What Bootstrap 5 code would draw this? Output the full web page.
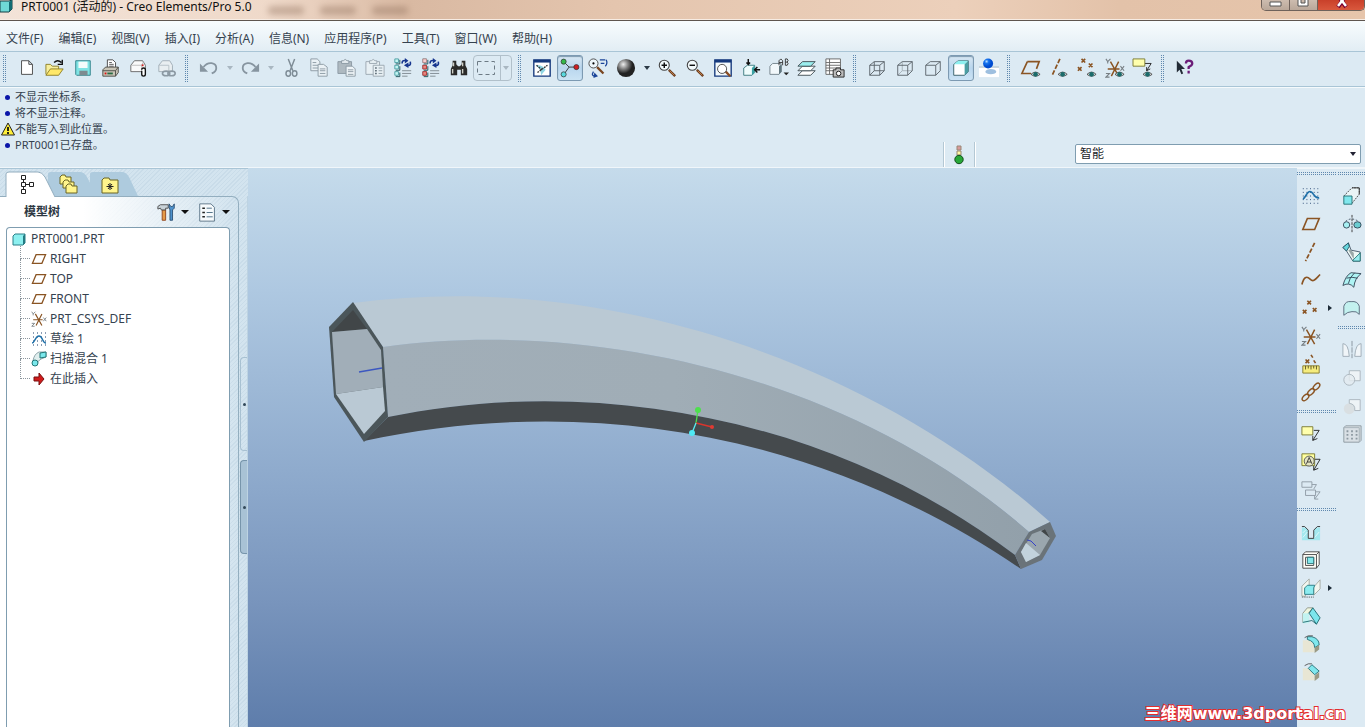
<!DOCTYPE html>
<html lang="zh-CN">
<head>
<meta charset="utf-8">
<meta name="viewport" content="width=device-width, initial-scale=1">
<title>PRT0001 (活动的) - Creo Elements/Pro 5.0</title>
<link href="https://cdn.jsdelivr.net/npm/bootstrap@5.3.0/dist/css/bootstrap.min.css" rel="stylesheet">
<style>
:root{--pane:#dceaf3;--line:#a9c5d6;--dot:#5f88ae}
body{font-family:"Noto Sans","Noto Sans CJK SC",sans-serif;font-size:12px;line-height:16px;color:#35424f;background:var(--pane)}
button{border:0;background:none;padding:0;color:inherit}
svg{display:block;overflow:visible}
.titlebar{height:21px;background:linear-gradient(90deg,#f3e3d8 0,#efd9c9 20%,#d9b9a2 30%,#e4c5ae 45%,#ecd0bb 70%,#e3c2a9 82%,#e6c5ab);border-bottom:1px solid #5f564f;box-shadow:inset 0 -1px #f7ece3;color:#111}
.titlebar h1{font-size:12px;line-height:14px;font-weight:400}
.ghost i{width:36px;height:9px;border-radius:4px;background:#8c6c58;opacity:.4;filter:blur(3px)}
.winbtns{height:11px;border:1px solid #6f625b;border-top:0;border-radius:0 0 5px 5px;overflow:hidden}
.winbtns button{height:10px;width:28px;background:linear-gradient(#cdbcaf,#b9a799);border-right:1px solid #6f625b}
.winbtns .x{width:46px;border:0;background:linear-gradient(#c9402a,#d9583d)}
.menubar{height:31px;padding:5px 6px 0;gap:15px;background:linear-gradient(#f8fcfe,#e2edf4);border-bottom:1px solid var(--line)}
.menubar a{color:#35424f;text-decoration:none}
.tools{height:35px;padding:0 0 2px 3px;border-bottom:1px solid var(--line);box-shadow:0 1px #f5fafc}
.tb{width:28px;height:26px;display:flex;align-items:center;justify-content:center;flex:none}
.tb svg{width:22px;height:22px}
.tools .tb svg{width:20px;height:20px}
.tools .tb.on{width:26px;margin:0 1px;border:1px solid #7d9ab2;border-radius:3px;background:linear-gradient(#d8e7f2,#b9d6ee 50%,#cbe3f4);box-shadow:inset 0 1px 1px #7e9ab0}
.dd{width:13px;height:26px;display:flex;align-items:center;justify-content:center}
.dd::after{content:"";border:3px solid transparent;border-top:4px solid #2c3a46;border-bottom:0}
.phead .dd::after{border-width:4px 4px 0;border-top-color:#111}
.dd.off::after{border-top-color:#a9b7c1}
.grip{width:3px;height:27px;margin:0 7px 0 4px;flex:none;background:repeating-linear-gradient(transparent 0 1px,var(--pane) 1px 2px),repeating-linear-gradient(90deg,var(--dot) 0 1px,var(--pane) 1px 2px)}
.grip:first-child{margin-left:0}
.griph{height:3px;margin:4px 0 7px;background:repeating-linear-gradient(transparent 0 1px,var(--pane) 1px 2px),repeating-linear-gradient(90deg,var(--dot) 0 1px,var(--pane) 1px 2px)}
.griph:first-child{margin-top:3px}
.selbox{width:39px;height:26px;margin:0 2px 0 0;border:1px solid #b1c0ca;border-radius:4px}
.selbox button+button{border-left:1px solid #b1c0ca;height:24px;width:12px}
.msgs{height:81px;border-bottom:1px solid #f0f6fa;padding:2px 4px 0 0}
.msgs ul{font-size:11px;line-height:16px}
.msgs li{padding-left:15px;position:relative}
.msgs li::before{content:"";position:absolute;left:5px;top:6px;width:5px;height:5px;border-radius:50%;background:#0a16a8}
.msgs li.warn::before{display:none}
.msgs li svg{position:absolute;left:1px;top:1px}
.status{width:32px;height:25px;border:solid #b4c8d4;border-width:0 1px;box-shadow:1px 0 #fff,inset 1px 0 #fff}
.pickwrap{padding-bottom:3px}
.msgs .pick{width:286px;height:20px;padding:0 4px;font-size:12px;line-height:16px;border:1px solid #7f9db0;border-radius:2px;background:#fff url("data:image/svg+xml,%3Csvg xmlns='http://www.w3.org/2000/svg' viewBox='0 0 6 4'%3E%3Cpath d='M0 0h6L3 4z' fill='%23223'/%3E%3C/svg%3E") no-repeat right 4px center/6px 4px}
.work{min-height:0}
.side{width:248px;padding-top:2px;background:repeating-linear-gradient(135deg,#d3e4ef 0 2px,#c9dce9 2px 3px);border-top:1px solid var(--line)}
.tabs{height:25px;padding-left:6px}
.tabs button{width:42px;height:25px;position:relative;flex:none}
.tabs button:first-child{z-index:2}
.pane{width:239px;border:1px solid #93aebf;border-width:1px 1px 0 0;border-radius:0 7px 0 0;background:linear-gradient(90deg,#fff 35%,transparent)}
.phead{height:30px;padding:0 6px 0 24px}
.phead h2{font-size:12px;font-weight:700;line-height:16px;color:#2d3843}
.phead .tb{width:24px}
.phead .tb svg{width:19px;height:19px}
.tree{margin:0 8px 0 6px;background:#fff;border:1px solid #7f9db0;border-bottom:0;border-radius:4px 4px 0 0;padding:1px 5px}
.tree li{height:20px;gap:3px;display:flex;align-items:center;white-space:nowrap}
.tree svg{width:16px;height:16px}
.tree ul li{padding-left:19px;position:relative}
.tree ul li::before{content:"";position:absolute;left:8px;top:-10px;width:10px;height:20px;border:dotted #8b959c;border-width:0 0 1px 1px}
.tree ul li:first-child::before{top:-3px;height:13px}
.split{width:9px;border-right:1px solid #bdd3e2;padding-top:161px;gap:9px}
.split button{width:7px;height:94px;margin-left:1px;border:1px solid #a8c1d2;border-right:0;border-radius:4px 0 0 4px;position:relative}
.split button::after{content:"";position:absolute;left:2px;top:45px;width:3px;height:3px;border-radius:50%;background:#33495a}
.split button+button{background:#a8c2d5;border-color:#7795ab}
.view{min-width:0;background:linear-gradient(#c5dbeb 0,#aec8e1 22%,#8fabcd 54%,#7894bc 78%,#5e7dab 100%)}
.right{width:68px;gap:2px;border-top:1px solid #f0f6fa}
.right .tb{height:28px;width:27px}
.right .tb svg{width:20px;height:20px}
.c1{width:39px}.c2{width:27px}
.fly{display:flex;align-items:center}
.fly::after{content:"";border:3px solid transparent;border-left:4px solid #1d2b37;border-right:0;margin-left:4px}
.sitemark{position:absolute;right:19px;bottom:3px;font:bold 16px/20px "DejaVu Sans","Noto Sans CJK SC",sans-serif;color:#fff;-webkit-text-stroke:2px #e32d2d;paint-order:stroke fill;white-space:nowrap}
</style>
</head>
<body>
<svg width="0" height="0" class="position-absolute" aria-hidden="true"><defs>
<g id="eye"><path d="M0 4Q5-1 10 4Q5 8 0 4" fill="#e8f0f0" stroke="#444"/><circle cx="5" cy="4" r="2.6" fill="#1b6b6b"/></g>
<symbol id="plane" viewBox="0 0 22 22"><path d="M7 5H20L15 17H2Z" fill="none" stroke="#8a5423" stroke-width="1.8"/></symbol>
<symbol id="axis" viewBox="0 0 22 22"><path d="M15 1L5 21" stroke="#8a5423" stroke-width="1.9" stroke-dasharray="5 2"/></symbol>
<symbol id="csys" viewBox="0 0 22 22"><path d="M3 12H16M6 4L15 20M15 4L7 20" stroke="#8a5423" stroke-width="1.6"/><path d="M1 1L3 4L6 1M3 4V6M17 9L21 14M21 9L17 14M1 17H5L1 21H5" fill="none" stroke="#777f84" stroke-width="1.200"/></symbol>
<symbol id="sketch" viewBox="0 0 22 22"><path d="M2 3H21M2 7H21M2 11H21M2 15H21M2 19H21" stroke="#1b3c6a" stroke-dasharray="1 3"/><path d="M2 14C5 14 6 6 10 6S14 14 20 13" fill="none" stroke="#1d6fa8" stroke-width="1.8"/></symbol>
<symbol id="arc" viewBox="0 0 16 16"><path d="M2 2H15M2 6H15M2 10H15M2 14H15" stroke="#1b3c6a" stroke-dasharray="1 3"/><path d="M1 12C4 12 4 5 8 5S11 12 15 12" fill="none" stroke="#1d6fa8" stroke-width="1.400"/></symbol>
<symbol id="cube" viewBox="0 0 22 22"><path d="M3 7L8 3H19V15L15 19H3Z" fill="#fff" stroke="#335d66"/><path d="M3 7L8 3H19L15 7Z" fill="#8df0f0"/><path d="M15 7L19 3V15L15 19Z" fill="#4a9ea3"/></symbol>
<symbol id="list3" viewBox="0 0 22 22"><g fill="#c5f6f4" stroke="#4a9ea3"><path d="M2 1H6V5H2ZM2 8H6V12H2ZM2 15H6V19H2Z"/></g><path d="M3 6.500H7.500V2M3 13.500H7.500V9M3 20.500H7.500V16" fill="none" stroke="#174e55"/></symbol>
<symbol id="swap" viewBox="0 0 22 22"><path d="M10 6Q10 2 14 3M19 4Q20 9 16 8" fill="none" stroke="#16358e" stroke-width="1.800"/><path d="M13 0L17 3L13 6ZM17 5L12 8L17 11Z" fill="#16358e"/><path d="M10 14H20M10 17H20M10 20H16" stroke="#7d8990"/></symbol>
<symbol id="note" viewBox="0 0 22 22"><path d="M14 7H20L13 18M13 13V18L18 16" fill="none" stroke="#222"/><path d="M1 3H13V12H1Z" fill="#ffffad" stroke="#77772f"/></symbol>
<symbol id="chain" viewBox="0 0 22 22"><g fill="none" stroke="#8a5423" stroke-width="1.6"><ellipse cx="5" cy="17" rx="4.500" ry="2.500" transform="rotate(-45 5 17)"/><ellipse cx="11" cy="11" rx="4.500" ry="2.500" transform="rotate(-45 11 11)"/><ellipse cx="17" cy="5" rx="4.500" ry="2.500" transform="rotate(-45 17 5)"/></g></symbol>
<symbol id="lens" viewBox="0 0 22 22"><path d="M13 13L20 20" stroke="#6b3c1c" stroke-width="2.600"/><path d="M14 14L19 19" stroke="#c78350"/><circle cx="8" cy="8" r="5.500" fill="#f3fafc" stroke="#444" stroke-width="1.200"/></symbol>
<radialGradient id="ball" cx=".35" cy=".3"><stop stop-color="#eee"/><stop offset=".5" stop-color="#858585"/><stop offset="1" stop-color="#222"/></radialGradient>
<radialGradient id="blue" cx=".35" cy=".3"><stop stop-color="#b9dcff"/><stop offset=".4" stop-color="#1674ee"/><stop offset="1" stop-color="#004cd0"/></radialGradient>
</defs></svg>

<div class="d-flex flex-column vh-100 overflow-hidden">
<header class="titlebar d-flex">
  <svg width="13" height="13" viewBox="0 0 13 13"><path d="M0 1H9L12 0V9L9 12H0Z" fill="#6fd9d6" stroke="#173f45"/><path d="M9 2V12L12 9V0Z" fill="#136b72"/></svg>
  <h1 class="mb-0 ms-2">PRT0001 (活动的) - Creo Elements/Pro 5.0</h1>
  <div class="ghost d-flex gap-3 ms-3 align-items-center flex-grow-1"><i></i><i></i><i></i></div>
  <div class="winbtns d-flex">
    <button aria-label="最小化"><svg width="27" height="10"><path d="M8 2H19V6H8Z" fill="#fff" stroke="#555"/></svg></button>
    <button aria-label="最大化"><svg width="27" height="10"><path d="M8 -2H18V6H8ZM11 -1V3H15V-1" fill="#fff" stroke="#555"/></svg></button>
    <button class="x" aria-label="关闭"><svg width="46" height="10"><path d="M20 7L27 -3M28 7L21 -3" stroke="#703" stroke-width="4"/><path d="M20 6L27 -3M28 6L21 -3" stroke="#fff" stroke-width="2.500"/></svg></button>
  </div>
</header>
<nav class="menubar d-flex align-items-center"><a href="#">文件(F)</a><a href="#">编辑(E)</a><a href="#">视图(V)</a><a href="#">插入(I)</a><a href="#">分析(A)</a><a href="#">信息(N)</a><a href="#">应用程序(P)</a><a href="#">工具(T)</a><a href="#">窗口(W)</a><a href="#">帮助(H)</a></nav>

<div class="tools d-flex align-items-center" role="toolbar" aria-label="工具栏">
  <span class="grip"></span>
  <button class="tb" aria-label="新建"><svg viewBox="0 0 22 22"><path d="M5 3H13L17 7V18H5ZM13 3V7H17" fill="#fff" stroke="#444"/></svg></button>
  <button class="tb" aria-label="打开"><svg viewBox="0 0 22 22"><path d="M1 18V7H6L8 9H15V12" fill="#f7ee9c" stroke="#8a7d24"/><path d="M1 19L6 12H20L15 19Z" fill="#ffe86a" stroke="#8a7d24"/><path d="M10 5Q14 1 18 5M19 2V7H14" fill="none" stroke="#111" stroke-width="1.500"/></svg></button>
  <button class="tb" aria-label="保存"><svg viewBox="0 0 22 22"><path d="M3 3H19V19H4L3 18Z" fill="#7fe3e4" stroke="#2b7f88"/><path d="M6 4H16V11H6Z" fill="#f4fcfc"/><path d="M7 14H16V19H7Z" fill="#7d8b90"/></svg></button>
  <button class="tb" aria-label="打印"><svg viewBox="0 0 22 22"><path d="M7 11V2H13L16 5V11" fill="#fff" stroke="#444"/><path d="M9 5H12M9 7H14M9 9H14" stroke="#555"/><path d="M2 13L5 10H19V16L16 20H2Z" fill="#c8c4b6" stroke="#4b4b45"/><path d="M2 14H16V20M16 14L19 10" fill="none" stroke="#4b4b45"/><path d="M4 16H6V18H4Z" fill="#d11"/><path d="M7 16H13V18H7Z" fill="#286a42"/></svg></button>
  <button class="tb" aria-label="发送"><svg viewBox="0 0 22 22"><path d="M2 8L6 3H15L18 8V15H2Z" fill="#fafafa" stroke="#666"/><path d="M2 8H14V15M14 8L16 4" fill="none" stroke="#bbb"/><path d="M14 7H16V9H14Z" fill="#c22"/><path d="M14 13Q14 11 16 11T18 13V18Q18 20 16 20T14 18V14" fill="#fff" stroke="#111" stroke-width="1.500"/></svg></button>
  <button class="tb" aria-label="发送链接"><svg viewBox="0 0 22 22"><path d="M2 8L6 3H14L17 8V15H2Z" fill="#e9eef1" stroke="#a0acb5"/><path d="M2 8H13V15" fill="none" stroke="#b6c0c7"/><g fill="none" stroke="#8c99a3" stroke-width="1.800"><ellipse cx="10" cy="17" rx="4" ry="2.500"/><ellipse cx="16" cy="17" rx="4" ry="2.500"/></g></svg></button>
  <span class="grip"></span>
  <button class="tb" aria-label="撤消"><svg viewBox="0 0 22 22"><path d="M5 10C10 3 19 5 19 11Q19 15 14 17" fill="none" stroke="#8795a0" stroke-width="2"/><path d="M1 6V15H10Z" fill="#8795a0"/></svg></button><button class="dd off" aria-label="撤消列表"></button>
  <button class="tb" aria-label="重做"><svg viewBox="0 0 22 22"><path d="M17 10C12 3 3 5 3 11Q3 15 8 17" fill="none" stroke="#8795a0" stroke-width="2"/><path d="M21 6V15H12Z" fill="#8795a0"/></svg></button><button class="dd off" aria-label="重做列表"></button>
  <button class="tb" aria-label="剪切"><svg viewBox="0 0 22 22"><g fill="none" stroke="#7e8c96" stroke-width="1.600"><path d="M8 1L13 14M15 1L10 14"/><ellipse cx="8" cy="17" rx="2.500" ry="3"/><ellipse cx="15" cy="17" rx="2.500" ry="3"/></g></svg></button>
  <button class="tb" aria-label="复制"><svg viewBox="0 0 22 22"><g fill="#eaf1f5" stroke="#8a98a2"><path d="M2 1H9L12 4V14H2Z"/><path d="M4 5H8M4 8H10M4 11H10"/><path d="M10 7H16L20 10V20H10Z"/><path d="M12 12H18M12 14H18M12 17H18"/></g></svg></button>
  <button class="tb" aria-label="粘贴"><svg viewBox="0 0 22 22"><path d="M1 4H16V17H1Z" fill="#aeb9c0" stroke="#8a98a2"/><path d="M5 6V3H7Q9 0 11 3H13V6Z" fill="#e4ebef" stroke="#8a98a2"/><path d="M10 9H17L20 12V20H10Z" fill="#eef4f7" stroke="#8a98a2"/><path d="M12 13H18M12 15H18M12 18H18" stroke="#8a98a2"/></svg></button>
  <button class="tb" aria-label="选择性粘贴"><svg viewBox="0 0 22 22"><g fill="#e8f0f4" stroke="#9aa7b0"><path d="M1 4H16V18H1Z"/><path d="M5 6V3H7Q9 0 11 3H13V6Z"/><path d="M9 8H21V20H9Z"/></g><path d="M11 11H13M11 14H13M11 17H13" stroke="#66747e" stroke-width="1.600"/><path d="M15 11H19M15 14H19M15 17H19" stroke="#8a98a2"/></svg></button>
  <button class="tb" aria-label="再生"><svg viewBox="0 0 22 22"><use href="#list3"/><use href="#swap"/></svg></button>
  <button class="tb" aria-label="再生管理器"><svg viewBox="0 0 22 22"><use href="#list3"/><path d="M2 1H6V5H2Z" fill="#f7d1d1" stroke="#b88"/><path d="M2 8H6V12H2ZM2 15H6V19H2Z" fill="#e78a81" stroke="#b33"/><use href="#swap"/></svg></button>
  <button class="tb" aria-label="查找"><svg viewBox="0 0 22 22"><path d="M4 3H8V7L10 9H12L14 7V3H18V8L20 12V19H13V13H9V19H2V12L4 8Z" fill="#2b2b29"/><path d="M5 5V9M4 12V17M15 5V9M15 12V17" stroke="#cfcfc6" stroke-width="1.500"/></svg></button>
  <span class="selbox d-flex"><button class="flex-grow-1" aria-label="选取框"><svg width="26" height="24"><path d="M3.500 5.500H20.500V18.500H3.500Z" fill="none" stroke="#6c7a84" stroke-dasharray="4 3"/></svg></button><button class="dd off" aria-label="选取方式"></button></span>
  <span class="grip"></span>
  <button class="tb" aria-label="重画"><svg viewBox="0 0 22 22"><path d="M2 2H20V20H2Z" fill="#fff" stroke="#15397d" stroke-width="1.500"/><path d="M2 2H20V5H2Z" fill="#15397d"/><path d="M4 8Q12 7 15 13L10 19Q10 12 4 8Z" fill="#8ed6e4"/><path d="M5 8L11 13M6 16L10 13L17 8" fill="none" stroke="#333" stroke-width="1.500" stroke-dasharray="2 1"/></svg></button>
  <button class="tb on" aria-label="旋转中心"><svg viewBox="0 0 22 22"><path d="M5 5L10 10L5 17M10 10H18" fill="none" stroke="#333"/><g stroke="#333" stroke-width=".8"><circle cx="4" cy="4" r="2.800" fill="#35b94a"/><circle cx="4" cy="18" r="2.800" fill="#58d9df"/><circle cx="18" cy="10" r="2.800" fill="#d01e23"/></g></svg></button>
  <button class="tb" aria-label="定向模式"><svg viewBox="0 0 22 22"><path d="M10 10L17 17" stroke="#7a4520" stroke-width="2.500"/><circle cx="6" cy="6" r="5" fill="#eef6fa" stroke="#444"/><circle cx="6" cy="6" r="1.200"/><path d="M13 2H19M14 6H18M20 2Q22 6 19 9M6 15Q3 20 8 20" fill="none" stroke="#1a4499" stroke-width="1.400"/><path d="M7 16L11 20L6 22Z" fill="#1a4499"/></svg></button>
  <button class="tb" aria-label="外观库"><svg viewBox="0 0 22 22"><circle cx="11" cy="11" r="10" fill="url(#ball)"/></svg></button><button class="dd" aria-label="外观列表"></button>
  <button class="tb" aria-label="放大"><svg viewBox="0 0 22 22"><use href="#lens"/><path d="M5 8H11M8 5V11" stroke="#111" stroke-width="1.600"/></svg></button>
  <button class="tb" aria-label="缩小"><svg viewBox="0 0 22 22"><use href="#lens"/><path d="M5 8H11" stroke="#111" stroke-width="1.600"/></svg></button>
  <button class="tb" aria-label="重新调整"><svg viewBox="0 0 22 22"><path d="M2 2H20V20H2Z" fill="#f4fafc" stroke="#15397d" stroke-width="1.500"/><path d="M2 2H20V5H2Z" fill="#15397d"/><path d="M14 15L19 20" stroke="#8a4c22" stroke-width="2.500"/><circle cx="10" cy="12" r="5" fill="#fff" stroke="#444"/></svg></button>
  <button class="tb" aria-label="重定向"><svg viewBox="0 0 22 22"><path d="M3 11L7 8H15V16L12 19H3Z" fill="#eefcfc" stroke="#38777d"/><path d="M12 11L15 8V16L12 19Z" fill="#3aa2a4"/><path d="M8 1V7M6 5L8 7L10 5M21 13H15M18 10L15 13L18 16" fill="none" stroke="#111" stroke-width="1.600"/></svg></button>
  <button class="tb" aria-label="已命名视图"><svg viewBox="0 0 22 22"><path d="M1 9L4 6H13V15L11 18H1Z" fill="#f2f8fb" stroke="#718089"/><path d="M11 9V18L14 15V7Z" fill="#62777f"/><path d="M11 8V3L13 1L15 3V8M11 5H15M18 1V8H20Q22 6 20 4.500Q22 3 20 1H18M18 4.500H20" fill="none" stroke="#333"/><path d="M16 16H22L19 19Z" fill="#222"/></svg></button>
  <button class="tb" aria-label="层"><svg viewBox="0 0 22 22"><g stroke="#3d4a50"><path d="M1 19L6 14H20L15 19Z" fill="#fff"/><path d="M1 14L6 9H20L15 14Z" fill="#fff"/><path d="M1 9L6 4H20L15 9Z" fill="#9beeee"/></g></svg></button>
  <button class="tb" aria-label="视图管理器"><svg viewBox="0 0 22 22"><path d="M1 1H17V18H1ZM1 5H17M1 8H17M1 11H17M1 14H17M5 1V18" fill="#fff" stroke="#666"/><path d="M9 13H12V11H17V13H21V21H9Z" fill="#bbb" stroke="#222"/><circle cx="15" cy="17" r="2.500" fill="#fff" stroke="#111"/></svg></button>
  <span class="grip"></span>
  <button class="tb" aria-label="线框"><svg viewBox="0 0 22 22"><path d="M3 8H14V19H3ZM8 4H19V14H8ZM3 8L8 4M14 8L19 4M14 19L19 14M3 19L8 14" fill="none" stroke="#596269"/></svg></button>
  <button class="tb" aria-label="隐藏线"><svg viewBox="0 0 22 22"><path d="M8 4V14H19M3 19L8 14" fill="none" stroke="#a5b0b7"/><path d="M3 8H14V19H3ZL8 4H19V14L14 19M14 8L19 4" fill="none" stroke="#596269"/></svg></button>
  <button class="tb" aria-label="消隐"><svg viewBox="0 0 22 22"><path d="M3 8H14V19H3ZL8 4H19V14L14 19M14 8L19 4" fill="none" stroke="#596269"/></svg></button>
  <button class="tb on" aria-label="着色"><svg viewBox="0 0 22 22"><use href="#cube"/></svg></button>
  <button class="tb" aria-label="增强的真实感"><svg viewBox="0 0 22 22"><path d="M0 10H22V21H0Z" fill="#fff"/><path d="M0 10H22" stroke="#9fb4c1"/><ellipse cx="13" cy="15" rx="6" ry="3" fill="#9ebfdf"/><circle cx="10" cy="6" r="5.500" fill="url(#blue)"/></svg></button>
  <span class="grip"></span>
  <button class="tb" aria-label="基准平面显示"><svg viewBox="0 0 22 22"><path d="M7 4H20L17 12M7 4L1 17H11" fill="none" stroke="#8a5423" stroke-width="1.800"/><use href="#eye" x="11" y="14"/></svg></button>
  <button class="tb" aria-label="基准轴显示"><svg viewBox="0 0 22 22"><path d="M12 1L3 20" stroke="#8a5423" stroke-width="1.900" stroke-dasharray="5 2"/><use href="#eye" x="10" y="14"/></svg></button>
  <button class="tb" aria-label="基准点显示"><svg viewBox="0 0 22 22"><path d="M5 1L9 5M9 1L5 5M13 6L17 10M17 6L13 10M1 10L5 14M5 10L1 14" stroke="#8a5423" stroke-width="1.800"/><use href="#eye" x="11" y="14"/></svg></button>
  <button class="tb" aria-label="坐标系显示"><svg viewBox="0 0 22 22"><use href="#csys" width="22" height="22"/><use href="#eye" x="11" y="14"/></svg></button>
  <button class="tb" aria-label="注释显示"><svg viewBox="0 0 22 22"><path d="M13 6H20L15 14M15 10V14L19 12" fill="none" stroke="#222"/><path d="M0 1H13V9H0Z" fill="#ffffad" stroke="#77772f"/><use href="#eye" x="11" y="14"/></svg></button>
  <span class="grip"></span>
  <button class="tb" aria-label="上下文相关帮助"><svg viewBox="0 0 22 22"><path d="M2 3V16L5 13L7 18L9 17L7 12H11Z" fill="#222b36"/><path d="M12 6Q12 3 15 3Q19 3 19 6Q19 8 15 10V12M15 14V17" fill="none" stroke="#6b1d78" stroke-width="2.500"/></svg></button>
</div>

<section class="msgs d-flex align-items-end">
  <ul class="list-unstyled mb-0 align-self-start flex-grow-1"><li>不显示坐标系。</li><li>将不显示注释。</li><li class="warn"><svg width="14" height="14" viewBox="0 0 14 14"><path d="M7 1L13.500 13H.5Z" fill="#ffef3a" stroke="#222"/><path d="M7 5V9M7 10V12" stroke="#111" stroke-width="1.800"/></svg>不能写入到此位置。</li><li>PRT0001已存盘。</li></ul>
  <div class="status d-flex align-items-center justify-content-center me-5"><svg width="10" height="20" viewBox="0 0 10 20"><path d="M3 1H7V5H3Z" fill="#d99a9a" stroke="#987"/><path d="M3 6H7V10H3Z" fill="#fff7a0" stroke="#987"/><circle cx="5" cy="14.500" r="4.200" fill="#27a838" stroke="#134d1b"/></svg></div>
  <div class="pickwrap ms-5"><select class="form-select pick ms-1" aria-label="选取过滤器"><option>智能</option></select></div>
</section>

<main class="work d-flex flex-grow-1">
  <aside class="side d-flex flex-column flex-shrink-0">
    <div class="tabs d-flex" role="tablist">
      <button role="tab" aria-selected="true" aria-label="模型树"><svg width="50" height="26" viewBox="0 0 50 26"><path d="M0 26V3Q0 1 3 1H32Q36 1 39 6L49 26Z" fill="#fff"/><path d="M0 26V3Q0 1 3 1H32Q36 1 39 6L49 26" fill="none" stroke="#93aebf"/><path d="M15.500 4.500H19.500V8.500H15.500ZM15.500 11.500H19.500V15.500H15.500ZM15.500 18.500H19.500V22.500H15.500ZM23.500 11.500H27.500V15.500H23.500ZM17.500 8V11M17.500 15V18M19.500 13.500H23" fill="#fff" stroke="#222"/></svg></button>
      <button role="tab" aria-selected="false" aria-label="文件夹浏览器"><svg width="50" height="26" viewBox="0 0 50 26"><path d="M0 25V3Q0 1 3 1H32Q36 1 39 6L49 25H7Z" fill="#aecbde"/><g fill="#fff58c" stroke="#6b6524"><path d="M12 6L14 4H17L18 6H23V13H12Z"/><path d="M15 11L17 9H20L21 11H26V17H15Z"/><path d="M18 15L20 13H23L24 15H29V22H18Z"/></g></svg></button>
      <button role="tab" aria-selected="false" aria-label="收藏夹"><svg width="50" height="26" viewBox="0 0 50 26"><path d="M0 25V3Q0 1 3 1H32Q36 1 39 6L48 25H7Z" fill="#aecbde"/><path d="M12 22V9L14 7H19L20 9H28V22Z" fill="#fff58c" stroke="#6b6524"/><path d="M20 12V19M16.500 15.500H23.500M18 13L22 18M22 13L18 18" stroke="#222"/></svg></button>
    </div>
    <div class="d-flex flex-grow-1">
      <div class="pane d-flex flex-column">
        <div class="phead d-flex align-items-center"><h2 class="mb-0 me-auto">模型树</h2>
          <button class="tb" aria-label="设置"><svg viewBox="0 0 22 22"><path d="M6 8H10V20H6Z" fill="#e59a48" stroke="#8d3f18"/><path d="M1 4L4 2H13V6H10V8H5L4 6L1 7Z" fill="#c8d2d8" stroke="#444"/><path d="M15 8V20H18V8L20 6V1L18 4L16 4L14 1V5Z" fill="#4e91cb" stroke="#284d70"/></svg></button><button class="dd" aria-label="设置菜单"></button>
          <button class="tb ms-1" aria-label="显示"><svg viewBox="0 0 22 22"><path d="M2 1H15L19 5V21H2Z" fill="#f6fafc" stroke="#506b7e"/><path d="M5 6H8M5 11H8M5 16H8" stroke="#222" stroke-width="1.800"/><path d="M10 6H16M10 11H17M10 16H17" stroke="#3d6079"/></svg></button><button class="dd" aria-label="显示菜单"></button>
        </div>
        <ul class="tree list-unstyled flex-grow-1 mb-0">
          <li><svg><path d="M1 5L3 3H13V12L11 14H1Z" fill="#8df0f0" stroke="#2b7f88"/><path d="M11 5L13 3V12L11 14Z" fill="#247b82"/></svg><span>PRT0001.PRT</span></li>
          <li class="d-block h-auto"><ul class="list-unstyled">
            <li><svg><use href="#plane"/></svg><span>RIGHT</span></li>
            <li><svg><use href="#plane"/></svg><span>TOP</span></li>
            <li><svg><use href="#plane"/></svg><span>FRONT</span></li>
            <li><svg><use href="#csys"/></svg><span>PRT_CSYS_DEF</span></li>
            <li><svg><use href="#arc"/></svg><span>草绘 1</span></li>
            <li><svg viewBox="0 0 16 16"><path d="M2 10Q3 3 8 1H15V6L10 8Q6 10 6 14Z" fill="#e0eeee" stroke="#8fa5aa"/><path d="M9 2L15 1V6L9 7Z" fill="#7be8ec" stroke="#277"/><circle cx="4" cy="12" r="3" fill="#7be8ec" stroke="#277"/></svg><span>扫描混合 1</span></li>
            <li><svg viewBox="0 0 16 16"><path d="M3 6H8V2L13 8L8 14V10H3Z" fill="#cf1b1b" stroke="#7a1010"/></svg><span>在此插入</span></li>
          </ul></li>
        </ul>
      </div>
      <div class="split d-flex flex-column flex-grow-1"><button aria-label="折叠浏览器"></button><button aria-label="折叠导航器"></button></div>
    </div>
  </aside>

  <section class="view flex-grow-1 overflow-hidden">
    <svg width="100%" height="100%" viewBox="248 168 1049 559" preserveAspectRatio="xMidYMid meet" role="img" aria-label="扫描混合模型">
      <defs><linearGradient id="mid" x1="0" x2="1"><stop stop-color="#a1aeb8"/><stop offset=".45" stop-color="#a0adb6"/><stop offset="1" stop-color="#92a0aa"/></linearGradient></defs>
      <path d="M353 303C600 270 868 360 1050 522L1029 532C850 375 590 318 383 347Z" fill="#bac9d4"/>
      <path d="M383 347C590 318 850 375 1029 532L1015 555C830 415 590 375 388 417Z" fill="url(#mid)"/>
      <path d="M388 417C590 375 830 415 1015 555L1021 569C825 435 590 392 364 441Z" fill="#454a4d"/>
      <path d="M353 302L383 347L388 417L364 442L334 397L329 327Z" fill="#4b565a"/>
      <path d="M332 332L353 310L367 329Z" fill="#414648"/>
      <path d="M332 332L367 329L381 350L383 387L336 394Z" fill="#a1aeb8"/>
      <path d="M336 394L383 387L385 411L364 434Z" fill="#bac9d4"/>
      <path d="M359 372L382 368" stroke="#3c57c0" stroke-width="1.300"/>
      <path d="M1029 532L1050 522L1056 536L1042 560L1021 569L1015 555Z" fill="#6a7379"/>
      <path d="M1032 534L1045 529L1050 538L1040 555L1026 562L1021 552Z" fill="#9aa6ae"/>
      <path d="M1041 531L1045 529L1050 538Z" fill="#414648"/>
      <path d="M1021 552L1026 543L1040 555L1026 562Z" fill="#c2d2dc"/>
      <path d="M1027 540L1031 541L1036 546" fill="none" stroke="#3440c8"/>
      <g stroke-width="1.300"><path d="M696 423L698 410" stroke="#4de04d"/><path d="M696 423L712 427" stroke="#d8352d"/><path d="M696 423L692 433" stroke="#5bf0f5"/></g>
      <circle cx="698" cy="410" r="3" fill="#4de04d"/><circle cx="712" cy="427" r="2" fill="#e03a32"/><circle cx="692" cy="433" r="3" fill="#4fe9f5"/>
    </svg>
  </section>

  <aside class="right d-flex flex-shrink-0">
    <div class="c1">
      <div class="griph"></div>
      <button class="tb" aria-label="草绘"><svg><use href="#sketch"/></svg></button>
      <button class="tb" aria-label="平面"><svg><use href="#plane"/></svg></button>
      <button class="tb" aria-label="轴"><svg><use href="#axis"/></svg></button>
      <button class="tb" aria-label="曲线"><svg viewBox="0 0 22 22"><path d="M1 16C3 8 6 6 10 10S16 10 21 5" fill="none" stroke="#8a5423" stroke-width="1.800"/></svg></button>
      <div class="fly"><button class="tb" aria-label="点"><svg viewBox="0 0 22 22"><path d="M7 3L11 7M11 3L7 7M2 13L6 17M6 13L2 17M13 11L17 15M17 11L13 15" stroke="#8a5423" stroke-width="1.800"/></svg></button></div>
      <button class="tb" aria-label="坐标系"><svg><use href="#csys"/></svg></button>
      <button class="tb" aria-label="分析特征"><svg viewBox="0 0 22 22"><path d="M5 6L9 10M9 6L5 10M11 1L13 4M14 7L16 10" stroke="#8a5423" stroke-width="1.800"/><path d="M2 13H20V21H2Z" fill="#f5ec7d" stroke="#85792c"/><path d="M5 13V17M8 13V16M11 13V17M14 13V16M17 13V17" stroke="#5b5320"/></svg></button>
      <button class="tb" aria-label="参照"><svg><use href="#chain"/></svg></button>
      <div class="griph"></div>
      <button class="tb" aria-label="注释"><svg><use href="#note"/></svg></button>
      <button class="tb" aria-label="注释传播"><svg viewBox="0 0 22 22"><path d="M14 8H21L14 20M14 15V20L19 18" fill="none" stroke="#222"/><path d="M1 2H15V15H1Z" fill="#ffff9d" stroke="#77772f"/><circle cx="9" cy="10" r="5.500" fill="#e5e5c2" stroke="#555"/><path d="M6 13L9 6L12 13M7 11H11" fill="none" stroke="#333"/></svg></button>
      <button class="tb" aria-label="注释元素"><svg viewBox="0 0 22 22"><path d="M1 2H12V8H1ZM5 11H16V17H5ZM12 5H17L14 10M16 13H21L15 21M15 17V21H19" fill="none" stroke="#8e9ba4"/></svg></button>
      <div class="griph"></div>
      <button class="tb" aria-label="孔"><svg viewBox="0 0 22 22"><path d="M1 6H5L8 9V18H14V9L17 6H21V20H1Z" fill="#a3e8ef"/><path d="M8 6V9V18H14V9V6Z" fill="#dceaf3"/><path d="M1 5H4L8 9V18H14V9L18 5H21" fill="none" stroke="#333"/><path d="M2 12L5 9M2 17L7 11M15 17L20 11" stroke="#dff8f8"/></svg></button>
      <button class="tb" aria-label="壳"><svg viewBox="0 0 22 22"><path d="M2 5L5 2H20V16L17 20H2Z" fill="#fffef8" stroke="#444"/><path d="M2 5H17V20M17 5L20 2M5 8H14V17H5Z" fill="none" stroke="#444"/><path d="M7 8H14V15H7Z" fill="#86e8ec" stroke="#226c72"/></svg></button>
      <div class="fly"><button class="tb" aria-label="筋"><svg viewBox="0 0 22 22"><path d="M1 9L9 1V9L5 13V20H1ZM14 10L21 2V12L14 19Z" fill="#f3f6ef" stroke="#a4aaa2"/><path d="M4 11L7 8H15L14 11V18H4Z" fill="#8cecf0" stroke="#257981"/><path d="M1 21H15" stroke="#444" stroke-dasharray="1 1"/></svg></button></div>
      <button class="tb" aria-label="拔模"><svg viewBox="0 0 22 22"><path d="M2 8L7 2H13L8 8V18H2Z" fill="#eef6df" stroke="#8f9689"/><path d="M2 8H9V19H2Z" fill="#c2f3f1"/><path d="M13 2L21 13L17 20L9 8Z" fill="#7ce5ec" stroke="#1d6970"/><path d="M2 18L12 16L17 20" fill="none" stroke="#1d6970"/></svg></button>
      <button class="tb" aria-label="倒圆角"><svg viewBox="0 0 22 22"><path d="M2 7H9Q15 9 15 20H2Z" fill="#e8e6d4"/><path d="M7 3H12Q20 5 20 12L15 15Q15 8 7 6Z" fill="#80e7ed" stroke="#286f76"/><path d="M15 15L20 12V17L15 21Z" fill="#9a9a84"/><path d="M4 4L8 2H13" fill="none" stroke="#555"/></svg></button>
      <button class="tb" aria-label="倒角"><svg viewBox="0 0 22 22"><path d="M2 7H8L15 14V20H2Z" fill="#e8e6d4"/><path d="M8 7L12 3L20 10L15 14Z" fill="#80e7ed" stroke="#286f76"/><path d="M15 15L20 11V17L15 21Z" fill="#9a9a84"/><path d="M4 4L8 2H12" fill="none" stroke="#555"/></svg></button>
    </div>
    <div class="c2">
      <div class="griph"></div>
      <button class="tb" aria-label="拉伸"><svg viewBox="0 0 22 22"><path d="M2 11L11 2H19V9L11 19" fill="#eaf4f6" stroke="#444" stroke-dasharray="2 1"/><path d="M11 2H19V9" fill="none" stroke="#333"/><path d="M2 11H11V20H2Z" fill="#80e7ed" stroke="#226c72"/></svg></button>
      <button class="tb" aria-label="旋转"><svg viewBox="0 0 22 22"><circle cx="5" cy="12" r="3.500" fill="#a7f0f2" stroke="#345"/><ellipse cx="17" cy="12" rx="4" ry="3.500" fill="#6bcdd1" stroke="#345"/><path d="M4 8Q10 3 18 8" fill="none" stroke="#345" stroke-dasharray="2 2"/><path d="M11 1V21" stroke="#333" stroke-dasharray="3 1"/></svg></button>
      <button class="tb" aria-label="可变截面扫描"><svg viewBox="0 0 22 22"><path d="M1 6L7 1L10 9L20 11V21H12L5 10Z" fill="#eef8f5" stroke="#456"/><path d="M1 6L7 1L8 5L5 10Z" fill="#66d6dc" stroke="#256"/><path d="M12 20L20 12V21H12Z" fill="#9aeef0" stroke="#277"/><path d="M7 9L13 19V12L9 8Z" fill="#9aa8a8"/></svg></button>
      <button class="tb" aria-label="边界混合"><svg viewBox="0 0 22 22"><path d="M1 17Q4 6 10 3L21 4Q14 9 13 19Q8 13 1 17Z" fill="#aef3f3" stroke="#345"/><path d="M5 9Q11 7 17 9M14 3Q8 8 7 15" fill="none" stroke="#345"/></svg></button>
      <button class="tb" aria-label="造型"><svg viewBox="0 0 22 22"><path d="M2 19V9Q4 3 10 4Q17 3 19 9V18Q16 14 11 15Q6 15 2 19Z" fill="#c3f1ef" stroke="#567"/></svg></button>
      <div class="griph"></div>
      <button class="tb" aria-label="镜像"><svg viewBox="0 0 22 22"><path d="M1 4Q7 4 8 18H1ZM21 4Q15 4 14 18H21Z" fill="#f0f5f8" stroke="#9eabb5"/><path d="M11 1V20" stroke="#85929c" stroke-dasharray="6 1"/></svg></button>
      <button class="tb" aria-label="合并"><svg viewBox="0 0 22 22"><path d="M8 3H20V14H8Z" fill="#eef3f6" stroke="#aab5bd"/><circle cx="8" cy="13" r="6" fill="#e3ebf0" fill-opacity=".8" stroke="#aab5bd"/></svg></button>
      <button class="tb" aria-label="修剪"><svg viewBox="0 0 22 22"><circle cx="8" cy="14" r="6" fill="#d9dfe2"/><path d="M8 4H20V16H14Q15 9 8 8Z" fill="#eef3f6" stroke="#aab5bd"/></svg></button>
      <button class="tb" aria-label="阵列"><svg viewBox="0 0 22 22"><path d="M2 4L4 2H21V18L19 20H2Z" fill="#d9e0e5" stroke="#8b979f"/><path d="M2 4H19V20" fill="none" stroke="#a5b0b7"/><path d="M5 8H17M5 12H17M5 16H17" stroke="#8d99a1" stroke-width="2" stroke-dasharray="2 3"/></svg></button>
    </div>
  </aside>
</main>
</div>
<div class="sitemark">三维网www.3dportal.cn</div>
<script src="https://cdn.jsdelivr.net/npm/bootstrap@5.3.0/dist/js/bootstrap.bundle.min.js"></script>
</body>
</html>
